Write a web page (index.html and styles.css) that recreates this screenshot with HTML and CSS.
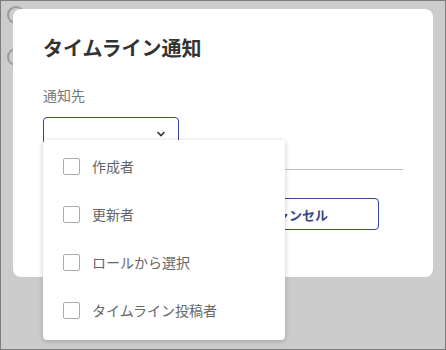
FILE: index.html
```html
<!DOCTYPE html>
<html lang="ja">

<head>
    <meta charset="UTF-8">
    <meta name="viewport" content="width=device-width, initial-scale=1.0">
    <title>タイムライン通知</title>
    <link rel="stylesheet" href="styles.css">
</head>

<body>
    <div class="screen">
        <div class="page-behind">
            <div class="radio-row"><span class="radio"></span><span class="radio-label">すべて</span></div>
            <div class="radio-row"><span class="radio"></span><span class="radio-label">個別</span></div>
        </div>

        <div class="dialog">
            <h1 class="dialog-title">タイムライン通知</h1>

            <label class="field-label">通知先</label>
            <div class="field">
                <div class="select">
                    <svg class="chevron" width="10" height="6" viewBox="0 0 10 6">
                        <path d="M1.5 1 L5 4.5 L8.5 1" fill="none" stroke="#333" stroke-width="1.6" />
                    </svg>
                </div>

                <ul class="menu">
                    <li class="menu-item"><span class="checkbox"></span>作成者</li>
                    <li class="menu-item"><span class="checkbox"></span>更新者</li>
                    <li class="menu-item"><span class="checkbox"></span>ロールから選択</li>
                    <li class="menu-item"><span class="checkbox"></span>タイムライン投稿者</li>
                </ul>
            </div>

            <hr class="divider">

            <div class="actions">
                <button class="btn btn-primary">保存</button>
                <button class="btn btn-outline">キャンセル</button>
            </div>
        </div>
    </div>
</body>

</html>
```

FILE: styles.css
```css
* {
    box-sizing: border-box;
}

body {
    margin: 0;
    font-family: "Noto Sans CJK JP", "Noto Sans", sans-serif;
    color: #333;
}

.screen {
    position: relative;
    width: 446px;
    height: 350px;
    border: 1px solid #7d7d7d;
    background: #cccccc;
    overflow: hidden;
}

/* greyed page under the overlay */
.page-behind {
    display: flex;
    flex-direction: column;
    gap: 22px;
    padding: 4px 0 0 6px;
}

.radio-row {
    display: flex;
    align-items: center;
    gap: 12px;
}

.radio {
    width: 18px;
    height: 18px;
    border: 2px solid #9a9a9a;
    border-radius: 50%;
}

.radio-label {
    font-size: 14px;
    color: #b0b0b0;
}

.dialog {
    position: absolute;
    left: 12px;
    top: 8px;
    width: 420px;
    height: 268px;
    background: #ffffff;
    border-radius: 8px;
    padding: 25px 30px;
}

.dialog-title {
    margin: 0 0 23px;
    font-size: 20px;
    line-height: 28px;
    font-weight: 700;
    color: #333;
}

.field-label {
    display: block;
    font-size: 14px;
    line-height: 20px;
    color: #777;
    margin-bottom: 12px;
}

.field {
    position: relative;
}

.select {
    width: 136px;
    height: 32px;
    border: 1px solid #3a4390;
    border-radius: 4px;
    display: flex;
    align-items: center;
    justify-content: flex-end;
    padding-right: 12px;
}

.chevron {
    margin-top: 2px;
}

.menu {
    position: absolute;
    left: 0;
    top: 23px;
    width: 242px;
    margin: 0;
    padding: 2px 0 6px;
    list-style: none;
    background: #ffffff;
    border-radius: 4px;
    box-shadow: 0 1px 5px rgba(0, 0, 0, 0.22);
    z-index: 2;
}

.menu-item {
    height: 48px;
    display: flex;
    align-items: center;
    gap: 12px;
    padding-left: 20px;
    font-size: 14px;
    color: #666;
}

.checkbox {
    width: 17px;
    height: 17px;
    border: 1.5px solid #aaa;
    border-radius: 2px;
}

.divider {
    margin: 20px 0 28px;
    border: none;
    border-top: 1px solid #bdbdbd;
}

.actions {
    display: flex;
    gap: 10px;
    width: 336px;
}

.btn {
    height: 32px;
    border-radius: 4px;
    font-family: inherit;
    font-size: 13px;
    font-weight: 700;
}

.btn-primary {
    width: 159px;
    background: #3a4390;
    border: 1px solid #3a4390;
    color: #fff;
}

.btn-outline {
    flex: 1;
    background: #fff;
    border: 1.5px solid #3a4390;
    color: #3a4390;
}
```
